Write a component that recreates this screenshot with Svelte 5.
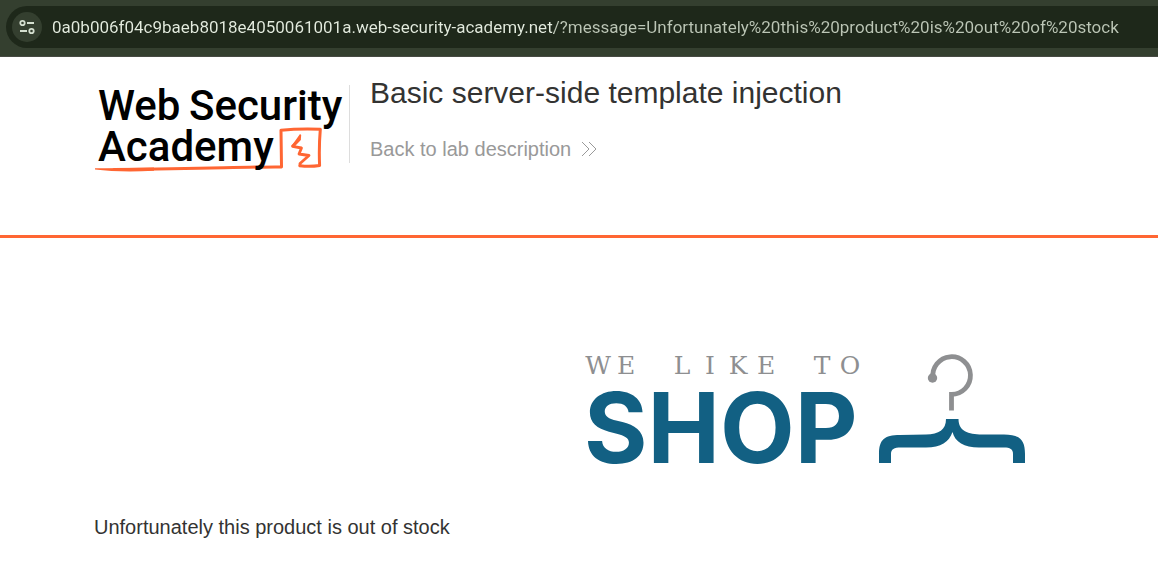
<script>
  const host = '0a0b006f04c9baeb8018e4050061001a.web-security-academy.net';
  const message = 'Unfortunately this product is out of stock';
  let address = $state(`${host}/?message=${encodeURIComponent(message)}`);

  // The tagline is set on an even typewriter pitch, one cell per character.
  const tagline = 'WE LIKE TO';
  const cells = [...tagline].map((_, i) => 12 + i * 28).join(' ');
</script>

<div class="browser-bar">
  <div class="omnibox">
    <button class="site-info" type="button" aria-label="View site information">
      <svg width="18" height="16" viewBox="0 0 18 16" fill="none" stroke="#d4dfcf" stroke-width="1.800">
        <circle cx="4.500" cy="4" r="2.200" />
        <path d="M9 4h7M2 12h7" />
        <circle cx="13.500" cy="12" r="2.200" />
      </svg>
    </button>
    <input class="address" type="text" aria-label="Address" spellcheck="false" bind:value={address} />
  </div>
</div>

<header class="lab-header">
  <a class="academy-logo" href="#home" aria-label="Web Security Academy">
    <svg width="250" height="90" viewBox="0 0 250 90">
      <g fill="none" stroke="#ff6633" stroke-linejoin="round" stroke-linecap="round">
        <path d="M20 88.500Q80 88 130 86.800T187.500 86L187 49.300Q205 47.500 226.300 48.300Q224.800 66 225.600 84.500Q216 86 206 84.800" stroke-width="3" />
        <path d="M206 84.800L206 82.500L215 74.500L205 73L207.500 67L198.500 65.300L205 58.500" stroke-width="2.800" />
      </g>
      <path fill="#ff6633" d="M1 87.300Q30 87.500 60 86.500L60 89.800Q25 91.500 1 88.500ZM206 53L207.200 54L206.800 59L201 65L197.500 65Z" />
      <g class="wordmark">
        <text x="4" y="39">Web</text>
        <text x="95" y="39">Security</text>
        <text x="4" y="80">Academy</text>
      </g>
    </svg>
  </a>
  <div class="lab-title">
    <h1>Basic server-side template injection</h1>
    <a class="back" href="#lab">
      Back to lab description
      <svg width="16" height="16" viewBox="0 0 16 16" fill="none" stroke="#999" stroke-width="1">
        <path d="M1 1l7 7-7 7M8 1l7 7-7 7" />
      </svg>
    </a>
  </div>
</header>

<main>
  <div class="brand">
    <svg width="440" height="116" viewBox="0 0 440 116" role="img" aria-label="We like to shop">
      <text class="tagline" x={cells} y="23">{tagline}</text>
      <text class="shop" x="-2" y="112">SHOP</text>
      <g fill="none" stroke="#8e8f91" stroke-width="4.800">
        <path d="M347 27A18.800 18.800 0 1 1 365.500 43.300V59.500" />
      </g>
      <circle cx="346.500" cy="27" r="4.700" fill="#8e8f91" />
      <path fill="#126083" d="M360 68H372.500C372.500 80 382 83.500 396 83.500H418C434 83.500 439 89 439 103V112H427V103C427 98 424 96.500 418 96.500H393C378 96.500 369 91 366.500 81C363 91 355 96.500 340 96.500H315C308 96.500 305 98 305 103V112H293V103C293 89 298 84 314 84L340 83.500C353 83 360 79 360 68Z" />
    </svg>
  </div>
  <p>{message}</p>
</main>

<style>
  :global(body) {
    margin: 0;
    background: #fff;
    color: #333332;
    font-family: "Liberation Sans", Arial, sans-serif;
  }
  .browser-bar {
    padding: 6px 0 8px 6px;
    background: #343f2f;
    border-bottom: 1px solid #474a43;
  }
  .omnibox {
    display: flex;
    align-items: center;
    gap: 10px;
    height: 42px;
    padding-left: 6px;
    border-radius: 21px 0 0 21px;
    background: #1e281a;
  }
  .site-info {
    display: flex;
    flex: none;
    align-items: center;
    justify-content: center;
    width: 30px;
    height: 30px;
    padding: 0;
    border: 0;
    border-radius: 50%;
    background: #343f2f;
  }
  .address {
    flex: 1;
    min-width: 0;
    padding: 0;
    border: 0;
    outline: 0;
    background: linear-gradient(90deg, #e4ecdf 502px, #bcc6b6 502px);
    background-clip: text;
    color: transparent;
    caret-color: #e4ecdf;
    font-family: Roboto, "Noto Sans", sans-serif;
    font-size: 17px;
    line-height: 28px;
  }
  .lab-header {
    display: flex;
    align-items: flex-start;
    height: 154px;
    padding: 24px 94px 0;
    border-bottom: 3px solid #ff6633;
  }
  .academy-logo {
    flex: none;
    padding-right: 5px;
  }
  svg {
    display: block;
    overflow: visible;
  }
  .wordmark {
    fill: #000;
    font-family: Roboto, sans-serif;
    font-size: 42px;
    font-weight: 500;
  }
  .lab-title {
    margin-top: 4px;
    padding-left: 20px;
    border-left: 1px solid #ddd;
    height: 78px;
  }
  h1 {
    margin: -10px 0 0;
    font-size: 30px;
    font-weight: 400;
    line-height: 36px;
  }
  .back {
    display: flex;
    align-items: center;
    gap: 10px;
    margin-top: 26px;
    color: #999;
    font-size: 20px;
    line-height: 24px;
    text-decoration: none;
  }
  main {
    padding: 113px 94px 20px;
  }
  .brand {
    display: flex;
    justify-content: flex-end;
    padding-right: 38px;
  }
  .tagline {
    fill: #8e8f91;
    font-family: "DejaVu Serif", serif;
    font-size: 25px;
    text-anchor: middle;
  }
  .shop {
    fill: #126083;
    font-family: Inter, "Liberation Sans", sans-serif;
    font-size: 97px;
    font-weight: 700;
  }
  p {
    margin: 47px 0 0;
    font-size: 20px;
    line-height: 26px;
  }
</style>
